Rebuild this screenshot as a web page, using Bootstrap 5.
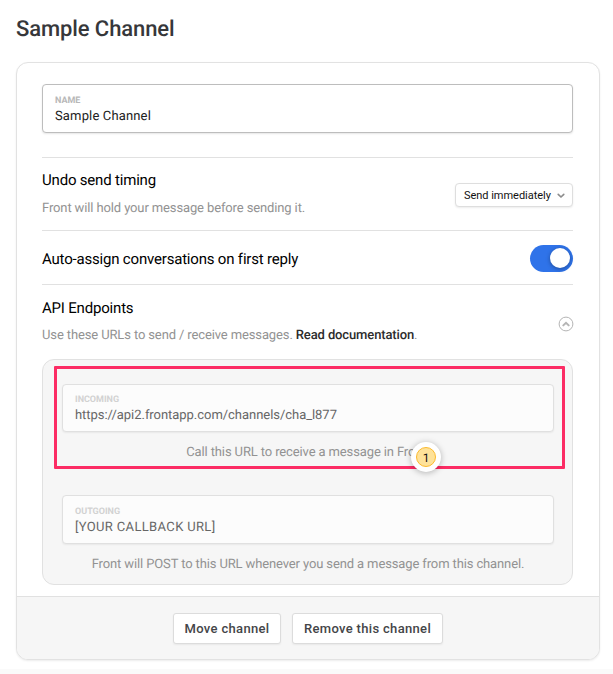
<!DOCTYPE html>
<html lang="en">
<head>
<meta charset="utf-8">
<meta name="viewport" content="width=device-width, initial-scale=1">
<title>Sample Channel</title>
<link href="https://cdn.jsdelivr.net/npm/bootstrap@5.3.0/dist/css/bootstrap.min.css" rel="stylesheet">
<style>
body{font-family:Roboto,sans-serif;font-size:13px;line-height:16px;color:#000;background:#fff;height:674px;overflow:hidden;text-rendering:geometricPrecision}
.page{padding:16px 13px 0 16px;height:669px}
.page-title{font-size:22px;line-height:28px;font-weight:500;color:#36373a;letter-spacing:-.1px;margin:0 0 18px}
.channel-card{--bs-card-border-color:#e2e2e2;--bs-card-border-radius:12px;--bs-card-inner-border-radius:11px;height:598px;width:584px;box-shadow:0 1px 2px rgba(0,0,0,.08)}
.channel-body{padding:21px 26px 0 25px}
.field{height:49px;border:1px solid #bdbdbd;border-radius:4px;background:#fff;padding:11px 12px 0;box-shadow:0 1px 2px rgba(0,0,0,.1)}
.field-label{font-size:9px;line-height:11px;font-weight:700;color:#b8b8b8;text-transform:uppercase}
.field-value{line-height:16px;margin-top:2px;color:#222;letter-spacing:.15px}
.name-field{margin-bottom:24px}
.setting{border-top:1px solid #e1e1e1}
.setting-title{font-size:15px;line-height:18px;font-weight:400;letter-spacing:-.19px;margin:0}
.hint{color:#929292;letter-spacing:-.125px}
.doc-link{color:#2c2c2c;font-weight:500;text-decoration:none}
.row-undo{height:73px;padding-top:13px}
.row-undo .hint{margin-top:12px}
.row-assign{height:54px}
.row-assign .setting-title{padding-top:2px}
.row-api{height:75px;padding-top:14px}
.api-hint{margin-top:11px}
.timing{height:24px;width:118px;margin-top:12px;padding:1px 7px 0 8px;border:1px solid #dedede;border-radius:4px;background:#fff;font-size:11px;line-height:15px;color:#111;letter-spacing:-.03px;box-shadow:0 1px 2px rgba(0,0,0,.08)}
.toggle-track.form-check-input{width:43px;height:27px;margin:1px 0 0;float:none;border:0;border-radius:14px;background:#2f73e9;padding:4px 3px;box-shadow:none}
.toggle-track{display:flex;justify-content:flex-end;align-items:center}
.toggle-knob{width:20px;height:20px;border-radius:50%;background:#fff;box-shadow:0 1px 4px rgba(0,0,0,.35)}
.collapse-icon{margin:17px -1px 0 0}
.endpoints{height:226px;border:1px solid #e1e1e1;border-radius:12px;background:#f6f6f6;padding:24px 18px 0 19px}
.endpoints .field{background:#fcfcfc;border-color:#e0e0e0;box-shadow:0 1px 2px rgba(0,0,0,.06)}
.endpoints .field-label{color:#d2d2d2}
.endpoints .field-value{color:#666;letter-spacing:.35px;margin-top:2px}
.endpoints .hint{padding-top:13px}
.incoming{height:111px}
.incoming .field{height:48px;padding-top:10px}
.endpoints .incoming .field-value{letter-spacing:-.04px}
.highlight{position:absolute;left:11px;right:7px;top:6px;height:103px;border:3px solid #fc2c64;border-radius:1px}
.step{position:absolute;left:368px;top:82px;width:30px;height:30px;border-radius:50%;background:#fff;box-shadow:0 1px 6px rgba(0,0,0,.28)}
.step-dot{width:20px;height:20px;border-radius:50%;border:1px solid #fcba2d;background:#fee29a;font-size:12px;line-height:16px;color:#111;padding-top:2px}
.channel-foot{height:63px;background:#f6f6f6!important;border-top:1px solid #e1e1e1!important;gap:11px;padding:0}
.act{height:31px;padding:1px 0 0;border:1px solid #dcdcdc;border-radius:3px;background:#fff;font-size:13px;line-height:16px;font-weight:500;color:#444548;letter-spacing:.33px;box-shadow:0 1px 2px rgba(0,0,0,.06)}
.act-move{width:108px}
.act-remove{width:151px}
.next-strip{height:5px;background:#fafafa}
</style>
<script src="https://cdn.jsdelivr.net/npm/bootstrap@5.3.0/dist/js/bootstrap.bundle.min.js"></script>
</head>
<body>
<main class="page">
  <h1 class="page-title">Sample Channel</h1>
  <section class="card channel-card">
    <div class="card-body channel-body">
      <div class="field name-field">
        <div class="field-label">Name</div>
        <div class="field-value">Sample Channel</div>
      </div>
      <div class="setting row-undo d-flex justify-content-between">
        <div>
          <h2 class="setting-title">Undo send timing</h2>
          <div class="hint">Front will hold your message before sending it.</div>
        </div>
        <button class="timing d-flex align-items-center justify-content-between" type="button"><span class="text-nowrap">Send immediately</span>
          <svg width="8" height="6" viewBox="0 0 8 6" fill="none" stroke="#8c8c8c" stroke-width="1.6" stroke-linecap="round"><path d="M1.2 1.3 4 4 6.8 1.3"/></svg>
        </button>
      </div>
      <div class="setting row-assign d-flex align-items-center justify-content-between">
        <h2 class="setting-title">Auto-assign conversations on first reply</h2>
        <span class="toggle-track form-check-input" role="switch" aria-checked="true"><span class="toggle-knob"></span></span>
      </div>
      <div class="setting row-api d-flex justify-content-between">
        <div>
          <h2 class="setting-title">API Endpoints</h2>
          <div class="hint api-hint">Use these URLs to send / receive messages. <a class="doc-link" href="#">Read documentation</a>.</div>
        </div>
        <svg class="collapse-icon" width="16" height="16" viewBox="0 0 16 16" fill="none" stroke="#b5b5b5"><circle cx="8" cy="8" r="6.9"/><path d="M5.3 9.4 8 6.8l2.7 2.6" stroke-width="2" stroke-linecap="round"/></svg>
      </div>
      <div class="endpoints position-relative">
        <div class="incoming">
          <div class="field">
            <div class="field-label">Incoming</div>
            <div class="field-value">https://api2.frontapp.com/channels/cha_l877</div>
          </div>
          <div class="hint text-center">Call this URL to receive a message in Front.</div>
        </div>
        <div class="field outgoing">
          <div class="field-label">Outgoing</div>
          <div class="field-value">[YOUR CALLBACK URL]</div>
        </div>
        <div class="hint text-center">Front will POST to this URL whenever you send a message from this channel.</div>
        <div class="highlight"></div>
        <div class="step d-flex align-items-center justify-content-center"><span class="step-dot d-flex align-items-center justify-content-center">1</span></div>
      </div>
    </div>
    <div class="card-footer channel-foot d-flex align-items-center justify-content-center">
      <button class="act act-move" type="button">Move channel</button>
      <button class="act act-remove" type="button">Remove this channel</button>
    </div>
  </section>
</main>
<div class="next-strip"></div>
</body>
</html>
